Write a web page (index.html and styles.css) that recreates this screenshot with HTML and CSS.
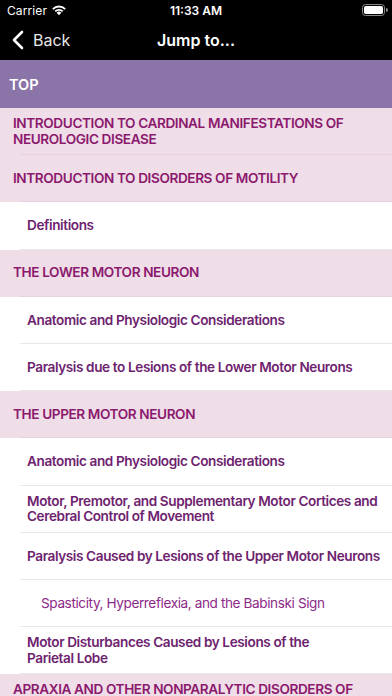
FILE: index.html
```html
<!DOCTYPE html>
<html>
<head>
<meta charset="utf-8">
<link rel="stylesheet" href="styles.css">
</head>
<body>
<div class="screen">
  <div class="status">
    <div class="status-left">
      <span class="carrier">Carrier</span>
      <svg class="wifi" width="16" height="12" viewBox="0 0 16 12">
        <path d="M8 11.2 L5.6 8.7 A3.4 3.4 0 0 1 10.4 8.7 Z" fill="#fff"/>
        <path d="M3.6 6.8 A6.2 6.2 0 0 1 12.4 6.8 L11.1 8.1 A4.4 4.4 0 0 0 4.9 8.1 Z" fill="#fff"/>
        <path d="M1.2 4.4 A9.6 9.6 0 0 1 14.8 4.4 L13.5 5.7 A7.8 7.8 0 0 0 2.5 5.7 Z" fill="#fff"/>
      </svg>
    </div>
    <div class="time">11:33 AM</div>
    <div class="status-right">
      <svg width="26" height="12" viewBox="0 0 26 12">
        <rect x="0.5" y="0.5" width="22" height="11" rx="3" fill="none" stroke="#888" stroke-width="1"/>
        <rect x="2" y="2" width="19" height="8" rx="1.8" fill="#fff"/>
        <path d="M24 4 v4 a1.6 1.6 0 0 0 0 -4z" fill="#888"/>
      </svg>
    </div>
  </div>
  <div class="navbar">
    <div class="back">
      <svg width="12" height="20" viewBox="0 0 12 20">
        <path d="M10 2 L2 10 L10 18" fill="none" stroke="#fff" stroke-width="2.6" stroke-linecap="round" stroke-linejoin="round"/>
      </svg>
      <span>Back</span>
    </div>
    <div class="title">Jump to...</div>
  </div>
  <div class="top">TOP</div>
  <ul class="list">
    <li class="row h1"><span>INTRODUCTION TO CARDINAL MANIFESTATIONS OF NEUROLOGIC DISEASE</span></li>
    <li class="row h1"><span>INTRODUCTION TO DISORDERS OF MOTILITY</span></li>
    <li class="row h2"><span>Definitions</span></li>
    <li class="row h1"><span>THE LOWER MOTOR NEURON</span></li>
    <li class="row h2"><span>Anatomic and Physiologic Considerations</span></li>
    <li class="row h2"><span>Paralysis due to Lesions of the Lower Motor Neurons</span></li>
    <li class="row h1"><span>THE UPPER MOTOR NEURON</span></li>
    <li class="row h2"><span>Anatomic and Physiologic Considerations</span></li>
    <li class="row h2"><span>Motor, Premotor, and Supplementary Motor Cortices and Cerebral Control of Movement</span></li>
    <li class="row h2"><span>Paralysis Caused by Lesions of the Upper Motor Neurons</span></li>
    <li class="row h3"><span>Spasticity, Hyperreflexia, and the Babinski Sign</span></li>
    <li class="row h2"><span class="narrow">Motor Disturbances Caused by Lesions of the Parietal Lobe</span></li>
    <li class="row h1 last"><span>APRAXIA AND OTHER NONPARALYTIC DISORDERS OF MOTILITY</span></li>
  </ul>
</div>
</body>
</html>
```
FILE: styles.css
```css
* { box-sizing: border-box; }
html, body { margin: 0; padding: 0; }
body {
  width: 392px;
  height: 696px;
  overflow: hidden;
  background: #fff;
  font-family: Inter, "Noto Sans", sans-serif;
}
.screen { display: flex; flex-direction: column; }
.status {
  height: 20px;
  background: #000;
  color: #fff;
  display: flex;
  align-items: center;
  justify-content: space-between;
  padding: 0 4px 0 7px;
  position: relative;
}
.status-left { display: flex; align-items: center; gap: 4px; }
.carrier { font-size: 12px; letter-spacing: 0.1px; }
.time {
  position: absolute;
  left: 0; right: 0;
  text-align: center;
  font-size: 12px;
  font-weight: 600;
}
.status-right { display: flex; align-items: center; }
.navbar {
  height: 40px;
  background: #000;
  color: #fff;
  display: flex;
  align-items: center;
  position: relative;
}
.back {
  display: flex;
  align-items: center;
  gap: 9px;
  padding-left: 12px;
  font-size: 16px;
  color: #e8e8e8;
}
.title {
  position: absolute;
  left: 0; right: 0;
  text-align: center;
  font-size: 16px;
  font-weight: 600;
  pointer-events: none;
}
.top {
  height: 48px;
  background: #8a74a8;
  color: #fff;
  font-size: 14.5px;
  font-weight: 600;
  display: flex;
  align-items: center;
  padding-left: 9px;
}
.list { list-style: none; margin: 0; padding: 0; }
.row {
  height: 47.2px;
  display: flex;
  align-items: center;
  font-size: 13.6px;
  letter-spacing: -0.4px;
  line-height: 15.5px;
  font-weight: 600;
  position: relative;
}
.row::after {
  content: "";
  position: absolute;
  left: 20px; right: 0; bottom: 0;
  height: 1px;
  background: #ebe6ec;
}
.h1 {
  background: #efdde8;
  color: #8b1a6e;
  padding-left: 13px;
  padding-right: 8px;
}
.h1::after { background: #e6d3df; }
.h2 {
  background: #fff;
  color: #6e236f;
  padding-left: 27px;
  padding-right: 1px;
}
.h3 {
  background: #fff;
  color: #8c2a88;
  font-weight: 400;
  padding-left: 41px;
}
.narrow { max-width: 300px; }
.last { align-items: flex-start; padding-top: 8px; }
```
